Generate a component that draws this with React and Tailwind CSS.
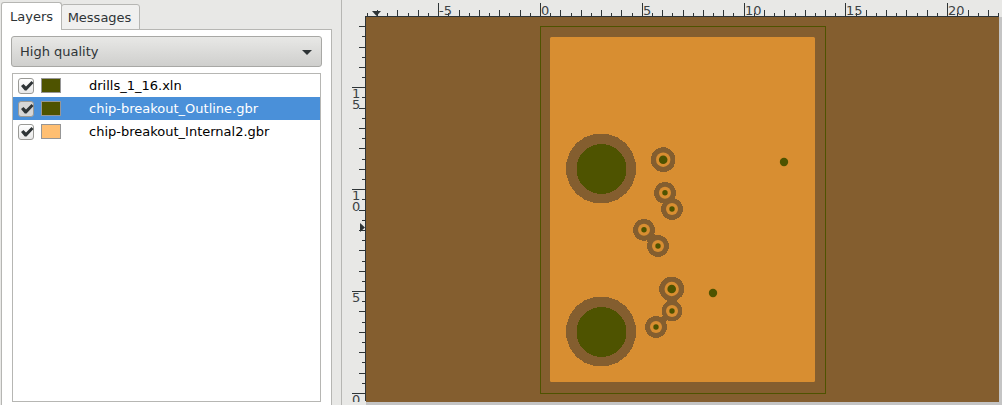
import { useState } from "react";

const LAYERS = [
  { name: "drills_1_16.xln", swatch: "bg-[#4e5300]" },
  { name: "chip-breakout_Outline.gbr", swatch: "bg-[#4e5300]" },
  { name: "chip-breakout_Internal2.gbr", swatch: "bg-[#ffbf72]" },
];

const STEP_X = 10.18;
const STEP_Y = 10.19;
const tickLength = (k) => (k % 10 === 0 ? 14 : k % 2 === 0 ? 7 : 4);

function TopRuler() {
  const ticks = [];
  for (let k = -17; k <= 45; k++) ticks.push(k);
  return (
    <svg className="block h-[17px] w-full" aria-hidden="true">
      <g fill="#2e3436" shapeRendering="crispEdges">
        <rect x="23" y="16" width="634" height="1" />
        {ticks.map((k) => (
          <rect
            key={k}
            x={Math.round(198 + k * STEP_X)}
            y={17 - tickLength(k)}
            width="1"
            height={tickLength(k)}
          />
        ))}
      </g>
      <path d="M30 11h9l-4.500 5z" fill="#2e3436" />
      <g fill="#3c4244" fontSize="13" fontFamily="DejaVu Sans, sans-serif">
        {[-5, 0, 5, 10, 15, 20].map((v) => (
          <text key={v} x={Math.round(199 + v * 2 * STEP_X)} y="15">
            {v}
          </text>
        ))}
      </g>
    </svg>
  );
}

function SideRuler() {
  const ticks = [];
  for (let k = 0; k <= 36; k++) ticks.push(k);
  return (
    <svg className="block h-full w-[24px] shrink-0" aria-hidden="true">
      <g fill="#2e3436" shapeRendering="crispEdges">
        <rect x="23" y="0" width="1" height="384" />
        {ticks.map((k) => (
          <rect
            key={k}
            x={24 - tickLength(k)}
            y={Math.round(376 - k * STEP_Y)}
            width={tickLength(k)}
            height="1"
          />
        ))}
      </g>
      <path d="M18 206v9l5-4.500z" fill="#2e3436" />
      <g fill="#3c4244" fontSize="13" fontFamily="DejaVu Sans, sans-serif">
        {[0, 5, 10, 15].map((v) =>
          String(v)
            .split("")
            .map((digit, i) => (
              <text
                key={v + "-" + i}
                x="10"
                y={Math.round(387 - v * 2 * STEP_Y) + i * 11}
              >
                {digit}
              </text>
            ))
        )}
      </g>
    </svg>
  );
}

const MOUNTS = [
  [235, 151.500],
  [235, 314.500],
];

// x, y, clearance radius, ring radius, drill radius
const VIAS = [
  [297.200, 142.700, 12.500, 7.200, 4.300],
  [299, 175.800, 11, 6, 2.700],
  [306, 192, 11, 6, 2.700],
  [278, 212.800, 11, 6, 2.700],
  [292, 229, 11, 6, 2.700],
  [305.700, 272, 12.500, 7.200, 4.300],
  [306, 294, 10.500, 6, 2.700],
  [290, 310, 11, 6, 2.700],
];

function polygon(cx, cy, r, sides) {
  return Array.from({ length: sides }, (_, i) => {
    const a = ((i + 0.5) * 2 * Math.PI) / sides;
    return `${(cx + r * Math.cos(a)).toFixed(2)},${(cy + r * Math.sin(a)).toFixed(2)}`;
  }).join(" ");
}

function Board() {
  return (
    <svg className="block h-full w-full" role="img" aria-label="Board view">
      <rect x="184" y="20" width="265" height="345" rx="1.500" fill="#d88e31" />
      <g shapeRendering="crispEdges">
        <rect x="174.500" y="9.500" width="285" height="367" fill="none" stroke="#4e5300" />
        {MOUNTS.map(([x, y]) => (
          <g key={y}>
            <polygon points={polygon(x, y, 35.300, 20)} fill="#845e2f" />
            <circle cx={x + 0.5} cy={y + 0.5} r="25" fill="#4e5300" />
          </g>
        ))}
        {VIAS.map(([x, y, r]) => (
          <polygon key={y} points={polygon(x, y, r, 16)} fill="#845e2f" />
        ))}
        <path d="M299 178L306 192M278 213L292 229M306 272V294" stroke="#845e2f" strokeWidth="10" />
        <path d="M306 294L290 310" stroke="#845e2f" strokeWidth="7" />
      </g>
      {VIAS.map(([x, y, , ring, drill]) => (
        <g key={y}>
          <circle cx={x} cy={y} r={ring} fill="#d88e31" />
          <circle cx={x} cy={y} r={drill} fill="#4e5300" />
        </g>
      ))}
      <circle cx="418" cy="145" r="4.200" fill="#4e5300" />
      <circle cx="347" cy="276" r="4.200" fill="#4e5300" />
    </svg>
  );
}

function LayerRow({ layer, selected, onSelect }) {
  const [visible, setVisible] = useState(true);
  return (
    <li
      onClick={onSelect}
      className={
        selected
          ? "flex h-[23px] items-center bg-[#4a90d9] pl-[5px] text-white"
          : "flex h-[23px] items-center pl-[5px] text-black"
      }
    >
      <label className="flex items-center">
        <span className="relative block size-4">
          <input
            type="checkbox"
            checked={visible}
            onChange={(e) => setVisible(e.target.checked)}
            className={
              selected
                ? "block size-4 appearance-none rounded-[3px] border border-[#9a9a96] bg-[#d6d6d6]"
                : "block size-4 appearance-none rounded-[3px] border border-[#9a9a96] bg-linear-to-b from-white to-[#e8e8e8]"
            }
          />
          {visible && (
            <svg viewBox="0 0 16 16" className="pointer-events-none absolute inset-0 size-4" aria-hidden="true">
              <path d="M3 8L5.500 6L8 8.500L13.500 3L15.500 5L8.500 12.500H6.800Z" fill="#2e3436" />
            </svg>
          )}
        </span>
        <span className={"ml-[7px] h-[15px] w-5 border border-[#969696] " + layer.swatch} />
        <span className="ml-7 whitespace-nowrap">{layer.name}</span>
      </label>
    </li>
  );
}

export default function App() {
  const [selected, setSelected] = useState(1);
  return (
    <div className="flex h-screen overflow-hidden bg-[#e8e8e6] font-['DejaVu_Sans',sans-serif] text-[13px] leading-4 text-[#2e3436]">
      <aside className="flex w-[332px] shrink-0 flex-col pl-px pt-0.5">
        <div role="tablist" className="z-10 -mb-px flex items-end">
          <button
            role="tab"
            aria-selected="true"
            className="h-7 w-[61px] rounded-t-[3px] border border-b-0 border-[#b6b6b3] bg-white pt-px text-center"
          >
            Layers
          </button>
          <button
            role="tab"
            aria-selected="false"
            className="-ml-px h-[26px] w-[79px] rounded-t-[3px] border border-[#b6b6b3] bg-[#f0f0ef] pt-0.5 pr-0.5 text-center"
          >
            Messages
          </button>
        </div>
        <section className="flex min-h-0 flex-1 flex-col border border-b-0 border-[#b6b6b3] bg-white px-[9px] pt-1.5 pb-[3px]">
          <div className="relative">
            <select
              aria-label="Rendering quality"
              className="block h-[31px] w-full appearance-none rounded-[3px] border border-[#a8a8a5] bg-linear-to-b from-[#e8e8e6] to-[#cfcfcd] pr-7 pl-2"
            >
              <option>High quality</option>
            </select>
            <svg viewBox="0 0 10 5" className="pointer-events-none absolute top-[14px] right-[10px] h-[5px] w-[10px]" aria-hidden="true">
              <path d="M0 0h10L5 5z" fill="#2e3436" />
            </svg>
          </div>
          <ul className="mx-px mt-1.5 flex-1 border border-[#b6b6b3] bg-white">
            {LAYERS.map((layer, i) => (
              <LayerRow key={layer.name} layer={layer} selected={i === selected} onSelect={() => setSelected(i)} />
            ))}
          </ul>
        </section>
      </aside>
      <main className="ml-[9px] flex min-w-0 flex-1 flex-col border-l border-[#b6b6b3]">
        <TopRuler />
        <div className="flex min-h-0 flex-1 pb-[3px]">
          <SideRuler />
          <div className="-mb-[3px] min-w-0 flex-1 bg-[#c4c4c4] pr-[3px] pb-[3px]">
            <div className="h-full bg-[#845e2f]">
              <Board />
            </div>
          </div>
        </div>
      </main>
    </div>
  );
}
